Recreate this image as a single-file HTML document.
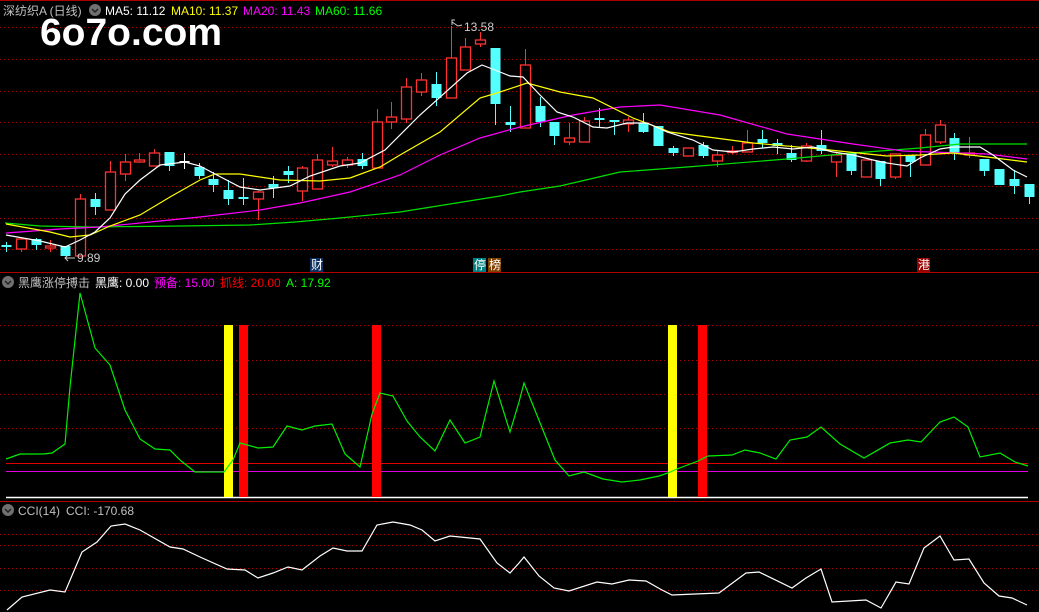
<!DOCTYPE html>
<html><head><meta charset="utf-8"><style>
html,body{margin:0;padding:0;background:#000;width:1039px;height:612px;overflow:hidden}
svg{display:block}
text{font-family:"Liberation Sans","Noto Sans CJK SC",sans-serif;font-size:12px}
</style></head><body>
<svg id="s" width="1039" height="612" xmlns="http://www.w3.org/2000/svg">
<rect width="1039" height="612" fill="#000"/>
<line x1="0" y1="0.5" x2="1039" y2="0.5" stroke="#a00" />
<g stroke="#b00000" stroke-dasharray="1,3" stroke-width="1">
<line x1="0" y1="27.5" x2="1039" y2="27.5"/><line x1="0" y1="59.5" x2="1039" y2="59.5"/>
<line x1="0" y1="91.5" x2="1039" y2="91.5"/><line x1="0" y1="122.5" x2="1039" y2="122.5"/>
<line x1="0" y1="154.5" x2="1039" y2="154.5"/><line x1="0" y1="186.5" x2="1039" y2="186.5"/>
<line x1="0" y1="218.5" x2="1039" y2="218.5"/><line x1="0" y1="249.5" x2="1039" y2="249.5"/>
<line x1="0" y1="325.5" x2="1039" y2="325.5"/><line x1="0" y1="360.5" x2="1039" y2="360.5"/>
<line x1="0" y1="394.5" x2="1039" y2="394.5"/><line x1="0" y1="428.5" x2="1039" y2="428.5"/>
<line x1="0" y1="534.5" x2="1039" y2="534.5"/><line x1="0" y1="545.5" x2="1039" y2="545.5"/>
<line x1="0" y1="568.5" x2="1039" y2="568.5"/><line x1="0" y1="590.5" x2="1039" y2="590.5"/>
</g>
<line x1="0" y1="272.5" x2="1039" y2="272.5" stroke="#b00000"/>
<line x1="0" y1="501.5" x2="1039" y2="501.5" stroke="#b00000"/>
<g id="candles"></g>
<g fill="none" stroke-width="1.2">
<polyline stroke="#00e000" points="5,223 40,226 90,227 180,226 250,225 295,222 340,218 400,212 450,204 500,196 520,192 560,186 620,172 687,167 787,159 853,153 920,148 960,144 1027,144"/>
<polyline stroke="#ff00ff" points="6,233 60,229 100,227 150,222 200,217 260,210 300,203 350,192 400,175 440,155 480,138 520,127 573,115 620,107 660,105 720,115 787,134 853,144 903,151 987,154 1027,159"/>
<polyline stroke="#ffff00" points="6,224 50,232 70,237 90,235 110,226 140,215 170,197 200,180 215,174 240,174 280,180 320,181 350,178 380,167 400,155 440,132 480,98 500,92 527,83 560,92 593,98 633,118 670,132 753,143 820,149 887,156 920,155 953,153 987,157 1027,162"/>
<polyline stroke="#ffffff" points="6,235 40,241 65,247 80,240 95,232 110,218 125,194 140,180 160,165 185,162 200,166 215,174 240,187 260,190 290,186 310,176 340,166 360,163 385,150 420,115 467,73 482,65 500,72 510,76 523,77 540,95 557,112 573,117 593,127 607,128 627,123 647,123 667,132 693,140 713,150 733,152 753,149 773,147 793,149 813,147 833,152 853,155 873,160 887,163 907,166 920,158 940,149 953,147 980,147 993,155 1013,170 1027,177"/>
</g>
<text x="3" y="15" fill="#c0c0c0">深纺织A (日线)</text>
<circle cx="95" cy="10" r="6" fill="#707070"/><path d="M92 9 l3 3 l3 -3" stroke="#222" fill="none" stroke-width="1.5"/>
<text x="105" y="15" fill="#fff">MA5: 11.12</text>
<text x="171" y="15" fill="#ff0">MA10: 11.37</text>
<text x="243" y="15" fill="#f0f">MA20: 11.43</text>
<text x="315" y="15" fill="#0f0">MA60: 11.66</text>
<text x="40" y="45" fill="#fff" textLength="182" lengthAdjust="spacingAndGlyphs" style="font-size:38px;font-weight:bold">6o7o.com</text>
<path d="M452 25 l0 -5 l3 0 M452 22 l6 4 l4 -1" stroke="#ccc" fill="none"/>
<text x="464" y="31" fill="#ccc">13.58</text>
<path d="M68 255 l-3 3 l3 3 M65 258 l10 0" stroke="#ccc" fill="none"/>
<text x="77" y="262" fill="#ccc">9.89</text>
<rect x="310" y="258" width="13" height="14" fill="#0c3060"/><text x="311" y="269" fill="#fff">财</text>
<rect x="473" y="258" width="13" height="14" fill="#008080"/><text x="474" y="269" fill="#fff">停</text>
<rect x="488" y="258" width="13" height="14" fill="#804000"/><text x="489" y="269" fill="#fff">榜</text>
<rect x="917" y="258" width="13" height="14" fill="#900"/><text x="918" y="269" fill="#fff">港</text>
<circle cx="8" cy="282" r="6" fill="#707070"/><path d="M5 281 l3 3 l3 -3" stroke="#222" fill="none" stroke-width="1.5"/>
<text x="18" y="287" fill="#c0c0c0">黑鹰涨停搏击</text>
<text x="95" y="287" fill="#fff">黑鹰: 0.00</text>
<text x="154" y="287" fill="#f0f">预备: 15.00</text>
<text x="220" y="287" fill="#f00">抓线: 20.00</text>
<text x="286" y="287" fill="#0f0">A: 17.92</text>
<line x1="6" y1="463.5" x2="1028" y2="463.5" stroke="#e00000"/>
<line x1="6" y1="471.5" x2="1028" y2="471.5" stroke="#e000e0"/>
<line x1="6" y1="497.5" x2="1028" y2="497.5" stroke="#fff" stroke-width="1.5"/>
<rect x="224" y="325" width="9" height="172" fill="#ff0"/>
<rect x="239" y="325" width="9" height="172" fill="#f00"/>
<rect x="372" y="325" width="9" height="172" fill="#f00"/>
<rect x="668" y="325" width="9" height="172" fill="#ff0"/>
<rect x="698" y="325" width="9" height="172" fill="#f00"/>
<polyline fill="none" stroke="#00ee00" stroke-width="1.2" points="6,459 20,454 43,454 52,453 65,444 70,387 80,293 95,348 110,365 125,410 140,439 155,449 170,450 180,460 195,472 215,472 224,472 233,460 240,443 258,448 273,447 287,426 302,430 315,426 332,424 345,454 360,467 372,414 380,393 393,396 407,421 420,437 435,451 450,420 465,443 480,437 494,381 510,432 519,402 524,383 555,460 569,476 584,472 603,479 622,482 640,480 659,476 668,473 677,469 698,461 708,456 732,455 745,450 760,453 776,459 790,440 807,437 821,427 840,444 864,458 890,443 908,440 921,442 940,422 954,417 968,427 980,457 1000,453 1015,462 1028,466"/>
<circle cx="8" cy="510" r="6" fill="#707070"/><path d="M5 509 l3 3 l3 -3" stroke="#222" fill="none" stroke-width="1.5"/>
<text x="18" y="515" fill="#c0c0c0">CCI(14)</text>
<text x="66" y="515" fill="#c0c0c0">CCI: -170.68</text>
<polyline fill="none" stroke="#fff" stroke-width="1.2" points="7,610 22,597 50,590 65,592 82,552 97,542 111,526 125,524 140,530 170,547 183,549 200,557 227,569 245,570 258,578 273,573 288,567 302,570 320,556 333,548 347,551 362,551 377,525 393,522 410,525 422,530 435,541 450,536 480,539 497,563 510,573 519,563 524,557 539,576 554,588 569,591 597,582 612,584 629,580 646,581 662,590 672,595 719,593 746,573 759,572 792,588 806,578 821,569 832,602 866,600 881,608 896,582 909,584 924,548 940,536 954,560 969,559 984,583 999,596 1012,598 1027,605"/>
</svg>
<script>
var d=[["c",245,247,242,252],["r",239,249,239,252],["c",239,245,238,250],["r",246,248,240,252],["c",246,256,246,256],["r",199,256,194,256],["c",199,207,193,215],["r",172,210,161,210],["r",162,174,154,181],["r",160,162,153,163],["r",153,166,149,166],["c",152,166,152,171],["w",161,163,153,169],["c",167,176,163,179],["c",179,185,172,192],["c",190,199,180,205],["c",197,199,178,205],["r",192,199,191,220],["c",184,188,176,198],["c",171,175,166,183],["r",168,191,166,201],["r",160,189,154,189],["r",161,165,147,167],["r",160,165,157,168],["c",159,166,153,169],["r",122,168,109,168],["r",117,122,102,129],["r",87,119,78,123],["r",80,92,73,96],["c",84,98,72,106],["r",58,98,26,98],["r",47,70,38,70],["r",40,44,32,47],["c",48,104,48,125],["c",122,125,106,132],["r",65,128,49,128],["c",106,122,97,127],["c",122,136,122,145],["r",138,142,123,145],["r",121,142,117,142],["c",118,120,108,128],["c",120,122,120,135],["r",120,124,117,132],["c",123,132,113,133],["c",126,146,126,146],["c",148,153,146,156],["r",148,156,148,156],["c",145,156,142,158],["r",155,161,151,167],["r",151,152,146,154],["r",143,152,130,152],["c",139,143,130,148],["c",143,146,139,154],["c",153,160,145,162],["r",146,161,143,162],["c",145,151,130,154],["r",155,162,152,177],["c",153,171,153,175],["r",160,177,160,177],["c",161,179,161,186],["r",154,177,154,179],["c",155,162,155,177],["r",135,165,129,165],["r",125,142,120,144],["c",138,153,133,160],["r",153,155,137,158],["c",159,171,159,176],["c",169,185,169,185],["c",179,186,170,194],["c",184,197,184,204]];
var g=document.getElementById("candles"),h="";
for(var i=0;i<d.length;i++){var x=Math.round(6+14.82*i)+0.5,c=d[i];
var col=c[0]=="r"?"#ff3232":(c[0]=="w"?"#ffffff":"#54ffff");
h+='<line x1="'+x+'" y1="'+c[3]+'" x2="'+x+'" y2="'+c[4]+'" stroke="'+col+'"/>';
var bh=Math.max(c[2]-c[1],1.5);
if(c[0]=="r") h+='<rect x="'+(x-5)+'" y="'+c[1]+'" width="10" height="'+bh+'" fill="#000" stroke="'+col+'" stroke-width="1.3"/>';
else h+='<rect x="'+(x-5)+'" y="'+c[1]+'" width="10" height="'+bh+'" fill="'+col+'"/>';}
g.innerHTML=h;
</script>
</body></html>
